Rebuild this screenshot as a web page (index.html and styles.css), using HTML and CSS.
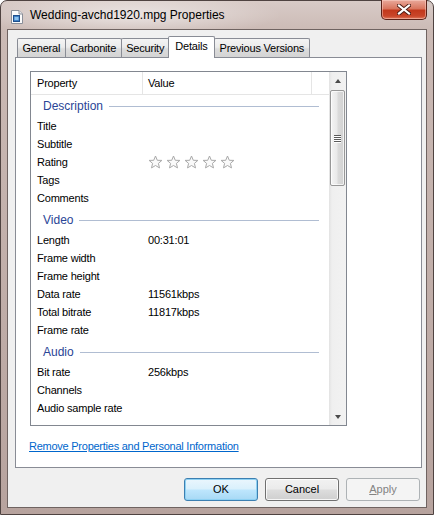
FILE: index.html
```html
<!DOCTYPE html>
<html>
<head>
<meta charset="utf-8">
<title>Wedding-avchd1920.mpg Properties</title>
<link rel="stylesheet" href="styles.css">
</head>
<body>
<div class="window">
  <div class="titlebar">
    <svg class="appicon" width="12" height="14" viewBox="0 0 12 14">
      <path d="M0.5 0.5 H8 L11.5 4 V13.5 H0.5 Z" fill="#fbfbfb" stroke="#8a8f99"/>
      <path d="M8 0.5 V4 H11.5" fill="#e4e6ea" stroke="#8a8f99"/>
      <rect x="2.5" y="5.5" width="6" height="6" fill="#3d7fc4" stroke="#1f4f8c"/>
      <rect x="3.5" y="7" width="4" height="3" fill="#8cc2ef"/>
    </svg>
    <span class="title">Wedding-avchd1920.mpg Properties</span>
    <div class="close">
      <svg width="14" height="11" viewBox="0 0 14 11">
        <path d="M2 1.5 L12 9.5 M12 1.5 L2 9.5" stroke="#4a1a12" stroke-width="4" stroke-linecap="square"/>
        <path d="M2 1.5 L12 9.5 M12 1.5 L2 9.5" stroke="#ffffff" stroke-width="2.2" stroke-linecap="square"/>
      </svg>
    </div>
  </div>
  <div class="client">
    <div class="tabs">
      <div class="tab">General</div>
      <div class="tab">Carbonite</div>
      <div class="tab">Security</div>
      <div class="tab active">Details</div>
      <div class="tab">Previous Versions</div>
    </div>
    <div class="panel">
      <div class="list">
        <div class="listmain">
          <div class="lhead">
            <div class="hc c1">Property</div>
            <div class="hc c2">Value</div>
            <div class="hc c3"></div>
          </div>
          <div class="lbody">
            <div class="sec first"><span>Description</span><i></i></div>
            <div class="row"><span class="k">Title</span><span class="v"></span></div>
            <div class="row"><span class="k">Subtitle</span><span class="v"></span></div>
            <div class="row"><span class="k">Rating</span><span class="v stars">
              <svg width="15" height="15" viewBox="0 0 15 15"><polygon points="7.5,1 9.3,5.3 13.9,5.4 10.4,8.4 11.5,12.9 7.5,10.5 3.5,12.9 4.6,8.4 1.1,5.4 5.7,5.3" fill="#fafafa" stroke="#a9a9a9" stroke-linejoin="round"/></svg>
              <svg width="15" height="15" viewBox="0 0 15 15"><polygon points="7.5,1 9.3,5.3 13.9,5.4 10.4,8.4 11.5,12.9 7.5,10.5 3.5,12.9 4.6,8.4 1.1,5.4 5.7,5.3" fill="#fafafa" stroke="#a9a9a9" stroke-linejoin="round"/></svg>
              <svg width="15" height="15" viewBox="0 0 15 15"><polygon points="7.5,1 9.3,5.3 13.9,5.4 10.4,8.4 11.5,12.9 7.5,10.5 3.5,12.9 4.6,8.4 1.1,5.4 5.7,5.3" fill="#fafafa" stroke="#a9a9a9" stroke-linejoin="round"/></svg>
              <svg width="15" height="15" viewBox="0 0 15 15"><polygon points="7.5,1 9.3,5.3 13.9,5.4 10.4,8.4 11.5,12.9 7.5,10.5 3.5,12.9 4.6,8.4 1.1,5.4 5.7,5.3" fill="#fafafa" stroke="#a9a9a9" stroke-linejoin="round"/></svg>
              <svg width="15" height="15" viewBox="0 0 15 15"><polygon points="7.5,1 9.3,5.3 13.9,5.4 10.4,8.4 11.5,12.9 7.5,10.5 3.5,12.9 4.6,8.4 1.1,5.4 5.7,5.3" fill="#fafafa" stroke="#a9a9a9" stroke-linejoin="round"/></svg>
            </span></div>
            <div class="row"><span class="k">Tags</span><span class="v"></span></div>
            <div class="row"><span class="k">Comments</span><span class="v"></span></div>
            <div class="sec"><span>Video</span><i></i></div>
            <div class="row"><span class="k">Length</span><span class="v">00:31:01</span></div>
            <div class="row"><span class="k">Frame width</span><span class="v"></span></div>
            <div class="row"><span class="k">Frame height</span><span class="v"></span></div>
            <div class="row"><span class="k">Data rate</span><span class="v">11561kbps</span></div>
            <div class="row"><span class="k">Total bitrate</span><span class="v">11817kbps</span></div>
            <div class="row"><span class="k">Frame rate</span><span class="v"></span></div>
            <div class="sec"><span>Audio</span><i></i></div>
            <div class="row"><span class="k">Bit rate</span><span class="v">256kbps</span></div>
            <div class="row"><span class="k">Channels</span><span class="v"></span></div>
            <div class="row"><span class="k">Audio sample rate</span><span class="v"></span></div>
            <div class="sec"><span>Media</span><i></i></div>
          </div>
        </div>
        <div class="vscroll">
          <div class="sbtn"><span class="arr up"></span></div>
          <div class="thumb"><span class="grip"></span><span class="grip"></span><span class="grip"></span><span class="grip"></span></div>
          <div class="track"></div>
          <div class="sbtn"><span class="arr down"></span></div>
        </div>
      </div>
      <a class="link" href="#">Remove Properties and Personal Information</a>
    </div>
    <div class="buttons">
      <div class="btn def">OK</div>
      <div class="btn">Cancel</div>
      <div class="btn dis"><u>A</u>pply</div>
    </div>
  </div>
</div>
</body>
</html>
```

FILE: styles.css
```css
* { box-sizing: border-box; }
html, body { margin: 0; padding: 0; }
body {
  width: 434px; height: 515px; overflow: hidden;
  font-family: "Liberation Sans", Arial, sans-serif;
  background: #ffffff;
}
.window {
  width: 434px; height: 515px;
  border: 1px solid #4f4341;
  border-radius: 7px 7px 0 0;
  background:
    radial-gradient(ellipse 150px 22px at 130px 14px, rgba(255,255,255,0.55), rgba(255,255,255,0) 100%),
    linear-gradient(to bottom, #d8cbc7 0, #cbbab5 30px, #b7a39e 100%);
  display: flex; flex-direction: column;
}
.titlebar {
  height: 28px; flex: none;
  display: flex; align-items: flex-start;
  padding: 0 6px 0 10px;
}
.appicon { margin-top: 9px; flex: none; }
.title {
  margin-top: 7px; margin-left: 7px;
  font-size: 12px; line-height: 15px; color: #000;
}
.close {
  margin-left: auto; margin-top: -1px;
  width: 46px; height: 20px;
  border: 1px solid #5a2219; border-top: none;
  border-radius: 0 0 5px 5px;
  background: linear-gradient(to bottom, #e9a99b 0, #d9765f 45%, #c2381c 55%, #c9462a 85%, #e07a5e 100%);
  box-shadow: inset 0 0 0 1px rgba(255,220,210,0.45);
  display: flex; align-items: center; justify-content: center;
}
.client {
  flex: 1;
  margin: 0 6px 6px 6px;
  border: 1px solid #6f6361;
  background: #f0f0f0;
  display: flex; flex-direction: column;
  padding: 0 4px 0 7px;
}
.tabs {
  height: 27px; flex: none;
  display: flex; align-items: flex-end;
  padding-left: 2px;
}
.tab {
  height: 19px;
  padding: 0 4.5px;
  border: 1px solid #898c95; border-bottom: none;
  border-radius: 2px 2px 0 0;
  background: linear-gradient(to bottom, #f4f4f4 0, #ebebeb 45%, #dcdcdc 55%, #d4d4d4 100%);
  font-size: 11px; letter-spacing: -0.2px; line-height: 18px; color: #000;
  margin-right: -1px;
}
.tab.active {
  height: 22px; margin: 0 -1px -1px -1px;
  padding: 0 6.5px;
  background: #ffffff;
  line-height: 19px;
  position: relative; z-index: 2;
}
.panel {
  height: 411px; flex: none;
  border: 1px solid #898c95;
  background: #ffffff;
  padding: 13px 0 0 14px;
  display: flex; flex-direction: column; align-items: flex-start;
}
.list {
  width: 317px; height: 355px; flex: none;
  border: 1px solid #828790;
  background: #ffffff;
  display: flex;
}
.listmain { flex: 1; overflow: hidden; display: flex; flex-direction: column; }
.lhead {
  height: 23px; flex: none;
  display: flex;
  border-bottom: 1px solid #e5e5e5;
  font-size: 11px; letter-spacing: -0.2px; line-height: 22px;
}
.hc { height: 22px; border-right: 1px solid #e5e5e5; }
.c1 { width: 112px; padding-left: 6px; }
.c2 { width: 169px; padding-left: 5px; }
.c3 { flex: 1; border-right: none; }
.lbody { flex: 1; overflow: hidden; }
.sec {
  height: 22px; display: flex; align-items: center;
  padding: 0 10px 0 12px;
  font-size: 12px; color: #2a4596;
}
.sec:not(.first) { margin-top: 2px; }
.sec i { flex: 1; height: 1px; background: #b0bdd2; margin-left: 6px; margin-top: 1px; }
.row {
  height: 18px; display: flex; align-items: center;
  font-size: 11px; letter-spacing: -0.2px; color: #000;
}
.k { width: 112px; padding-left: 6px; flex: none; }
.v { padding-left: 5px; }
.stars { display: flex; gap: 3px; padding-top: 1px; }
.stars svg { display: block; }
.vscroll {
  width: 17px; flex: none;
  display: flex; flex-direction: column;
  background: linear-gradient(to right, #e2e2e2 0, #efefef 3px, #f2f2f2 100%);
}
.sbtn { height: 17px; flex: none; display: flex; align-items: center; justify-content: center; }
.arr { width: 0; height: 0; border-left: 3.5px solid transparent; border-right: 3.5px solid transparent; }
.arr.up { border-bottom: 4px solid #4a4a4a; margin-top: 1px; }
.arr.down { border-top: 4px solid #4a4a4a; }
.thumb {
  margin: 1px 1px 0 1px; height: 96px; flex: none;
  border: 1px solid #979797; border-radius: 2px;
  background: linear-gradient(to right, #f4f4f4 0, #e9e9e9 45%, #dadada 55%, #d2d2d2 100%);
  box-shadow: inset 0 0 0 1px rgba(255,255,255,0.7);
  display: flex; flex-direction: column; align-items: center; justify-content: center; gap: 1px;
}
.grip { width: 7px; height: 1px; background: #5a5a5a; box-shadow: 0 1px 0 #ffffff; }
.track { flex: 1; }
.link {
  margin-top: 13px; margin-left: -1px;
  font-size: 11px; letter-spacing: -0.25px; line-height: 15px;
  color: #0066cc; text-decoration: underline;
}
.buttons {
  margin-top: 10px; margin-right: 2px;
  display: flex; justify-content: flex-end; gap: 7px;
}
.btn {
  width: 74px; height: 23px;
  border: 1px solid #707070; border-radius: 3px;
  background: linear-gradient(to bottom, #f2f2f2 0, #ebebeb 48%, #dddddd 52%, #cfcfcf 100%);
  box-shadow: inset 0 0 0 1px rgba(255,255,255,0.8);
  font-size: 11px; line-height: 21px; text-align: center; color: #000;
}
.btn.def {
  border-color: #3c7fb1;
  background: linear-gradient(to bottom, #eaf6fd 0, #d9f0fc 48%, #bee6fd 52%, #a7d9f5 100%);
  box-shadow: inset 0 0 0 1px #8ed1f3;
}
.btn.dis {
  border-color: #adb2b5;
  background: #f4f4f4;
  box-shadow: none;
  color: #838383;
}
```
